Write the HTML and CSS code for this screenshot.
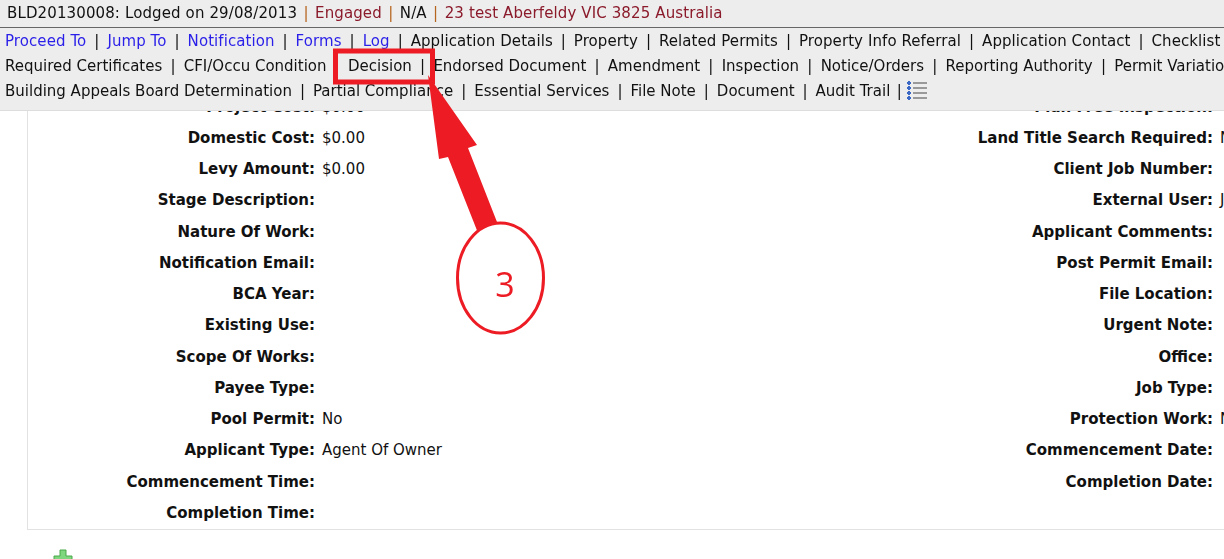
FILE: index.html
```html
<!DOCTYPE html>
<html lang="en">
<head>
<meta charset="utf-8">
<title>BLD20130008</title>
<link rel="stylesheet" href="styles.css">
</head>
<body>

<div class="topbar">
	<div class="summary">
		BLD20130008: Lodged on 29/08/2013 <span class="sep">|</span> <span class="status">Engaged</span> <span class="sep">|</span> N/A <span class="sep">|</span> <span class="status">23 test Aberfeldy VIC 3825 Australia</span>
	</div>
	<div class="menu">
		<div class="menurow wide">
			<a class="act" href="#">Proceed To</a><i>|</i><a class="act" href="#">Jump To</a><i>|</i><a class="act" href="#">Notification</a><i>|</i><a class="act" href="#">Forms</a><i>|</i><a class="act" href="#">Log</a><i>|</i><a href="#">Application Details</a><i>|</i><a href="#">Property</a><i>|</i><a href="#">Related Permits</a><i>|</i><a href="#">Property Info Referral</a><i>|</i><a href="#">Application Contact</a><i>|</i><a href="#">Checklist</a>
		</div>
		<div class="menurow loose">
			<a href="#">Required Certificates</a><i>|</i><a href="#">CFI/Occu Condition</a><i>|</i><a href="#">Decision</a><i>|</i><a href="#">Endorsed Document</a><i>|</i><a href="#">Amendment</a><i>|</i><a href="#">Inspection</a><i>|</i><a href="#">Notice/Orders</a><i>|</i><a href="#">Reporting Authority</a><i>|</i><a href="#">Permit Variation</a>
		</div>
		<div class="menurow">
			<a href="#">Building Appeals Board Determination</a><i>|</i><a href="#">Partial Compliance</a><i>|</i><a href="#">Essential Services</a><i>|</i><a href="#">File Note</a><i>|</i><a href="#">Document</a><i>|</i><a href="#">Audit Trail</a><i class="last">|</i>
			<svg class="listicon" width="21" height="21" viewBox="0 0 21 21">
				<g fill="#3a68c4">
					<path d="M1 1h2v1h1v2H3v1H1V4H0V2h1z"/>
					<path d="M1 6h2v1h1v2H3v1H1V9H0V7h1z"/>
					<path d="M1 11h2v1h1v2H3v1H1v-1H0v-2h1z"/>
					<path d="M1 16h2v1h1v2H3v1H1v-1H0v-2h1z"/>
				</g>
				<g fill="#999">
					<rect x="6" y="2" width="14" height="2"/>
					<rect x="6" y="7" width="14" height="2"/>
					<rect x="6" y="12" width="14" height="2"/>
					<rect x="6" y="17" width="14" height="2"/>
				</g>
			</svg>
		</div>
	</div>
</div>

<div class="details">
	<div class="lbl">Project Cost:</div><div class="val">$0.00</div><div class="lbl">Plan Free Inspection:</div><div class="val"></div>
	<div class="lbl">Domestic Cost:</div><div class="val">$0.00</div><div class="lbl">Land Title Search Required:</div><div class="val">No</div>
	<div class="lbl">Levy Amount:</div><div class="val">$0.00</div><div class="lbl">Client Job Number:</div><div class="val"></div>
	<div class="lbl">Stage Description:</div><div class="val"></div><div class="lbl">External User:</div><div class="val">J</div>
	<div class="lbl">Nature Of Work:</div><div class="val"></div><div class="lbl">Applicant Comments:</div><div class="val"></div>
	<div class="lbl">Notification Email:</div><div class="val"></div><div class="lbl">Post Permit Email:</div><div class="val"></div>
	<div class="lbl">BCA Year:</div><div class="val"></div><div class="lbl">File Location:</div><div class="val"></div>
	<div class="lbl">Existing Use:</div><div class="val"></div><div class="lbl">Urgent Note:</div><div class="val"></div>
	<div class="lbl">Scope Of Works:</div><div class="val"></div><div class="lbl">Office:</div><div class="val"></div>
	<div class="lbl">Payee Type:</div><div class="val"></div><div class="lbl">Job Type:</div><div class="val"></div>
	<div class="lbl">Pool Permit:</div><div class="val">No</div><div class="lbl">Protection Work:</div><div class="val">No</div>
	<div class="lbl">Applicant Type:</div><div class="val">Agent Of Owner</div><div class="lbl">Commencement Date:</div><div class="val"></div>
	<div class="lbl">Commencement Time:</div><div class="val"></div><div class="lbl">Completion Date:</div><div class="val"></div>
	<div class="lbl">Completion Time:</div><div class="val"></div><div class="lbl"></div><div class="val"></div>
</div>

<svg class="addicon" width="20" height="20" viewBox="0 0 20 20">
	<path d="M7 1h6v6h6v6h-6v6H7v-6H1V7h6z" fill="#7ed67e" stroke="#4aa84a"/>
</svg>

<svg class="callout" width="1224" height="559" viewBox="0 0 1224 559">
	<rect x="335.500" y="51" width="97" height="31" fill="none" stroke="#ed1c24" stroke-width="5"/>
	<path d="M428 75 L477 145 L468 148 L497 222 L478 233 L448 157 L439 159 Z" fill="#ed1c24"/>
	<ellipse cx="500.500" cy="278" rx="43" ry="55" fill="#fff" stroke="#ed1c24" stroke-width="3"/>
	<text x="505" y="297" class="calloutnum">3</text>
</svg>

</body>
</html>
```

FILE: styles.css
```css
html, body
{
	margin: 0;
	height: 559px;
	overflow: hidden;
	background: #fff;
}
body
{
	font-family: "DejaVu Sans", Verdana, sans-serif;
	font-size: 15px;
	color: #111;
}
.topbar
{
	position: fixed;
	top: 0;
	left: 0;
	right: 0;
	height: 110px;
	background: #ededed;
	border-bottom: 1px solid #ddd;
	z-index: 2;
}
.summary
{
	height: 27px;
	line-height: 26px;
	padding-left: 7px;
	border-bottom: 1px solid #666;
	white-space: nowrap;
	letter-spacing: 0.12px;
}
.sep
{
	color: #b5651d;
	margin: 0 1.5px;
}
.status
{
	color: #8b1a2b;
}
.menu
{
	padding: 0 0 0 5px;
}
.menurow
{
	display: flex;
	align-items: center;
	height: 25px;
	white-space: nowrap;
}
.menurow.wide a
{
	letter-spacing: 0.08px;
}
.menurow a
{
	color: #111;
	text-decoration: none;
}
.menurow a.act
{
	color: #2a1fe8;
}
.menurow i
{
	flex: none;
	font-style: normal;
	width: 21px;
	text-align: center;
}
.menurow.loose i
{
	width: 21.5px;
}
.menurow i.last
{
	width: 18px;
}
.listicon
{
	margin-left: -1px;
}
.details
{
	display: grid;
	grid-template-columns: 287px 606px 292px 200px;
	grid-auto-rows: 31.25px;
	width: 1400px;
	margin-left: 27px;
	padding: 90.65px 0 0 0;
	border-left: 1px solid #e2e2e2;
	border-bottom: 1px solid #e2e2e2;
	height: 438.35px;
}
.lbl
{
	font-weight: bold;
	text-align: right;
	line-height: 32px;
	white-space: nowrap;
}
.val
{
	padding-left: 7px;
	line-height: 32px;
	white-space: nowrap;
}
.addicon
{
	display: block;
	margin: 19px 0 0 53px;
}
.callout
{
	position: absolute;
	left: 0;
	top: 0;
	z-index: 3;
}
.calloutnum
{
	font-family: "Open Sans", sans-serif;
	font-size: 34px;
	fill: #ed1c24;
	text-anchor: middle;
}
```
